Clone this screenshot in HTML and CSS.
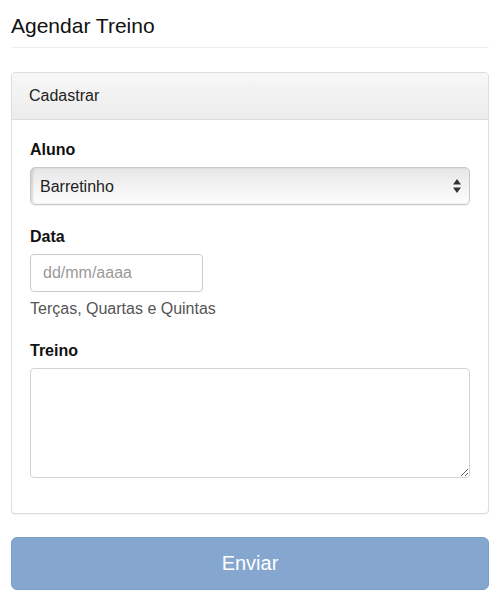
FILE: index.html
```html
<!DOCTYPE html>
<html lang="pt-BR">
<head>
    <meta charset="UTF-8">
    <meta name="viewport" content="width=device-width, initial-scale=1.0">
    <title>Agendar Treino</title>
    <link rel="stylesheet" href="styles.css">
</head>
<body>
    <div class="container">
        <div class="page-header">
            <h1>Agendar Treino</h1>
        </div>

        <form class="schedule-form">
            <div class="panel">
                <div class="panel-heading">Cadastrar</div>
                <div class="panel-body">
                    <div class="form-group">
                        <label for="aluno">Aluno</label>
                        <div class="select-wrap">
                            <select id="aluno" class="form-select">
                                <option>Barretinho</option>
                            </select>
                            <svg class="select-arrows" viewBox="0 0 8 14">
                                <path d="M4 0 L8 5.5 H0 Z M0 8.5 H8 L4 14 Z"/>
                            </svg>
                        </div>
                    </div>

                    <div class="form-group">
                        <label for="data">Data</label>
                        <input type="text" id="data" class="form-input date-input" placeholder="dd/mm/aaaa">
                        <p class="help-text">Terças, Quartas e Quintas</p>
                    </div>

                    <div class="form-group last">
                        <label for="treino">Treino</label>
                        <textarea id="treino" class="form-input form-textarea"></textarea>
                    </div>
                </div>
            </div>

            <button type="submit" class="submit-btn">Enviar</button>
        </form>
    </div>
</body>
</html>
```

FILE: styles.css
```css
* {
    margin: 0;
    padding: 0;
    box-sizing: border-box;
    font-family: 'Liberation Sans', Arial, sans-serif;
}

body {
    background: #fff;
    color: #111;
}

.container {
    padding: 0 11px;
}

.page-header {
    margin: 14px 0 24px;
    padding-bottom: 9px;
    border-bottom: 1px solid #eee;
}

h1 {
    font-size: 21px;
    font-weight: 400;
    line-height: 24px;
    color: #111;
}

.panel {
    border: 1px solid #ddd;
    border-radius: 4px;
    box-shadow: 0 1px 1px rgba(0,0,0,0.05);
    background: #fff;
}

.panel-heading {
    padding: 13px 17px;
    line-height: 20px;
    font-size: 16px;
    color: #222;
    background: linear-gradient(to bottom, #f7f7f7 0%, #ececec 100%);
    border-bottom: 1px solid #ddd;
    border-radius: 3px 3px 0 0;
}

.panel-body {
    padding: 20px 18px 35px;
}

.form-group {
    margin-bottom: 22px;
}

.form-group.last {
    margin-bottom: 0;
}

label {
    display: block;
    font-size: 16px;
    font-weight: 700;
    line-height: 20px;
    margin-bottom: 7px;
    color: #111;
}

.select-wrap {
    position: relative;
}

.form-select {
    appearance: none;
    -webkit-appearance: none;
    width: 100%;
    height: 38px;
    padding: 0 30px 0 9px;
    font-size: 16px;
    color: #222;
    border: 1px solid #c8c8c8;
    border-radius: 5px;
    background: linear-gradient(to bottom, #e6e6e6 0%, #f4f4f4 55%, #fdfdfd 100%);
    box-shadow: inset 2px 0 2px rgba(0,0,0,0.12), 0 1px 1px rgba(0,0,0,0.06);
    outline: none;
}

.select-arrows {
    position: absolute;
    right: 9px;
    top: 12px;
    width: 8px;
    height: 14px;
    fill: #333;
    pointer-events: none;
}

.form-input {
    display: block;
    height: 38px;
    padding: 0 12px;
    font-size: 16px;
    color: #222;
    border: 1px solid #ccc;
    border-radius: 4px;
    background: #fff;
    outline: none;
}

.form-input::placeholder {
    color: #999;
}

.date-input {
    width: 173px;
}

.help-text {
    margin-top: 7px;
    font-size: 16px;
    line-height: 20px;
    color: #555;
}

.form-textarea {
    width: 100%;
    height: 110px;
    padding: 6px 12px;
    resize: vertical;
    border-color: #d4d4d4;
}

.submit-btn {
    display: block;
    width: 100%;
    height: 53px;
    margin-top: 23px;
    font-size: 20px;
    color: #fff;
    background: #85a6cf;
    border: 1px solid #7b9cc8;
    border-radius: 6px;
    cursor: pointer;
}
```
